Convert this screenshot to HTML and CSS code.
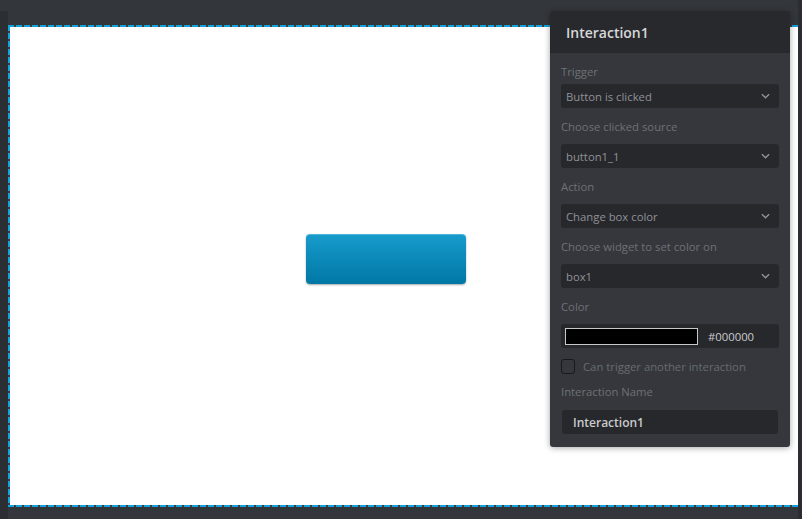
FILE: index.html
```html
<!DOCTYPE html>
<html lang="en">

<head>
    <meta charset="UTF-8">
    <title>Interaction editor</title>
    <link rel="stylesheet" href="styles.css">
</head>

<body>
    <div class="editor">
        <div class="side-strip"></div>
        <div class="workspace">
            <div class="canvas">
                <div class="widget-button"></div>
            </div>
        </div>
        <div class="scroll-strip"></div>

        <div class="interaction-panel">
            <div class="panel-header">Interaction1</div>
            <div class="panel-body">
                <label class="field-label">Trigger</label>
                <div class="select">
                    <span>Button is clicked</span>
                    <svg class="chevron" viewBox="0 0 10 6"><path d="M1 1l4 4 4-4" /></svg>
                </div>

                <label class="field-label">Choose clicked source</label>
                <div class="select">
                    <span>button1_1</span>
                    <svg class="chevron" viewBox="0 0 10 6"><path d="M1 1l4 4 4-4" /></svg>
                </div>

                <label class="field-label">Action</label>
                <div class="select">
                    <span>Change box color</span>
                    <svg class="chevron" viewBox="0 0 10 6"><path d="M1 1l4 4 4-4" /></svg>
                </div>

                <label class="field-label">Choose widget to set color on</label>
                <div class="select">
                    <span>box1</span>
                    <svg class="chevron" viewBox="0 0 10 6"><path d="M1 1l4 4 4-4" /></svg>
                </div>

                <label class="field-label">Color</label>
                <div class="color-row">
                    <div class="swatch"></div>
                    <span class="hex">#000000</span>
                </div>

                <div class="check-row">
                    <span class="checkbox"></span>
                    <span>Can trigger another interaction</span>
                </div>

                <label class="field-label">Interaction Name</label>
                <div class="name-input">Interaction1</div>
            </div>
        </div>
    </div>
</body>

</html>
```

FILE: styles.css
```css
* {
    margin: 0;
    padding: 0;
    box-sizing: border-box;
}

body {
    width: 802px;
    height: 519px;
    overflow: hidden;
    background: #33363b;
    font-family: 'Open Sans', 'Liberation Sans', sans-serif;
}

.editor {
    position: relative;
    display: flex;
    height: 100%;
}

.side-strip {
    width: 8px;
    margin-top: 11px;
    background: #2b2e32;
}

.workspace {
    flex: 1;
    padding-top: 25px;
    padding-bottom: 12px;
}

/* dashed selection outline drawn with gradients so the dash length matches */
.canvas {
    position: relative;
    height: 100%;
    background:
        repeating-linear-gradient(90deg, #12a2dc 0 6px, #3a3d42 6px 8px) top / 100% 2px no-repeat,
        repeating-linear-gradient(90deg, #12a2dc 0 6px, #3a3d42 6px 8px) bottom / 100% 2px no-repeat,
        repeating-linear-gradient(180deg, #12a2dc 0 6px, #3a3d42 6px 8px) left / 2px 100% no-repeat,
        #fff;
}

.scroll-strip {
    width: 4px;
    background: #2a2d31;
}

.widget-button {
    position: absolute;
    left: 298px;
    top: 209px;
    width: 160px;
    height: 50px;
    border-radius: 4px;
    background: linear-gradient(#179bcb, #0077a5);
    border-top: 1px solid #4db4da;
    box-shadow: 0 1px 2px rgba(0, 0, 0, 0.35);
}

/* floating panel */
.interaction-panel {
    position: absolute;
    left: 550px;
    top: 11px;
    width: 240px;
    background: #35373c;
    border-radius: 3px;
    box-shadow: 0 1px 6px rgba(0, 0, 0, 0.35);
}

.panel-header {
    height: 42px;
    padding: 0 16px;
    display: flex;
    align-items: center;
    background: #28292d;
    border-radius: 3px 3px 0 0;
    color: #d6d8da;
    font-size: 14px;
    font-weight: 600;
}

.panel-body {
    padding: 11px 11px 13px;
    display: flex;
    flex-direction: column;
}

.field-label {
    color: #6e7176;
    font-size: 11.3px;
    line-height: 15px;
    margin-bottom: 10px;
}

.field-label:first-child {
    margin-bottom: 5px;
}

.select,
.color-row {
    height: 24px;
    border-radius: 3px;
    background: #27282c;
    display: flex;
    align-items: center;
    padding: 0 9px 0 5px;
    margin-bottom: 11px;
    color: #8f9297;
    font-size: 11.3px;
}

.select span {
    flex: 1;
}

.chevron {
    width: 9px;
    height: 6px;
    fill: none;
    stroke: #8f9297;
    stroke-width: 1.6;
}

.color-row {
    padding: 0 4px;
}

.swatch {
    width: 133px;
    height: 17px;
    background: #000;
    border: 1px solid #c6c8ca;
}

.hex {
    margin-left: 10px;
    color: #c9cbcd;
    font-size: 11.3px;
}

.check-row {
    display: flex;
    align-items: center;
    gap: 8px;
    margin-bottom: 10px;
    color: #686b70;
    font-size: 11.3px;
}

.checkbox {
    width: 14px;
    height: 15px;
    border: 1.5px solid #18191c;
    border-radius: 3px;
}

.name-input {
    height: 24px;
    margin: 1px 1px 0;
    border-radius: 3px;
    background: #27282c;
    display: flex;
    align-items: center;
    padding: 0 11px;
    color: #c9cbcd;
    font-size: 12px;
    font-weight: 600;
}
```
